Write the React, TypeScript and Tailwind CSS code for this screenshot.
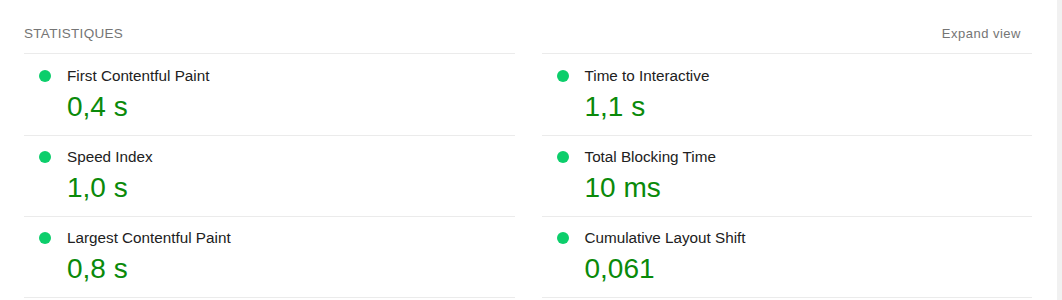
import React from "react";

const metrics = [
  { label: "First Contentful Paint", value: "0,4 s" },
  { label: "Time to Interactive", value: "1,1 s" },
  { label: "Speed Index", value: "1,0 s" },
  { label: "Total Blocking Time", value: "10 ms" },
  { label: "Largest Contentful Paint", value: "0,8 s" },
  { label: "Cumulative Layout Shift", value: "0,061" },
];

function Metric({ label, value, index }: { label: string; value: string; index: number }) {
  const last = index >= 4;
  const first = index < 2;
  return (
    <div
      className={`border-t border-[#ebebeb] ${last ? "border-b" : ""} ${first ? "pt-[12px] pb-[11px]" : "pt-[11px] pb-[11px]"}`}
    >
      <div className="flex items-start">
        <div className="ml-[15px] mr-[16px] h-[20px] flex items-center">
          <div className="w-[12px] h-[12px] rounded-full bg-[#0cce6b]" />
        </div>
        <div className="flex flex-col">
          <div className="text-[15.25px] leading-[20px] text-[#212121]">{label}</div>
          <div className="mt-[4px] text-[28px] leading-[34px] text-[#0a8a0a]">{value}</div>
        </div>
      </div>
    </div>
  );
}

export default function App() {
  return (
    <div
      className="flex w-[1062px] h-[300px] bg-white overflow-hidden"
      style={{ fontFamily: '"Liberation Sans", Arial, sans-serif' }}
    >
      <div className="flex-1">
        <div className="ml-[24px] w-[1008px]">
          <div className="flex justify-between items-center pt-[26px] pb-[11px]">
            <div className="text-[13.5px] leading-[16px] tracking-[0.3px] text-[#757575]">STATISTIQUES</div>
            <div className="text-[13px] leading-[16px] tracking-[0.5px] text-[#757575] pr-[11px]">Expand view</div>
          </div>
          <div className="grid grid-cols-2 gap-x-[27px]">
            {metrics.map((m, i) => (
              <Metric key={m.label} label={m.label} value={m.value} index={i} />
            ))}
          </div>
        </div>
      </div>
      <div className="w-[5px] h-full bg-[#f1f1f1]" />
    </div>
  );
}
